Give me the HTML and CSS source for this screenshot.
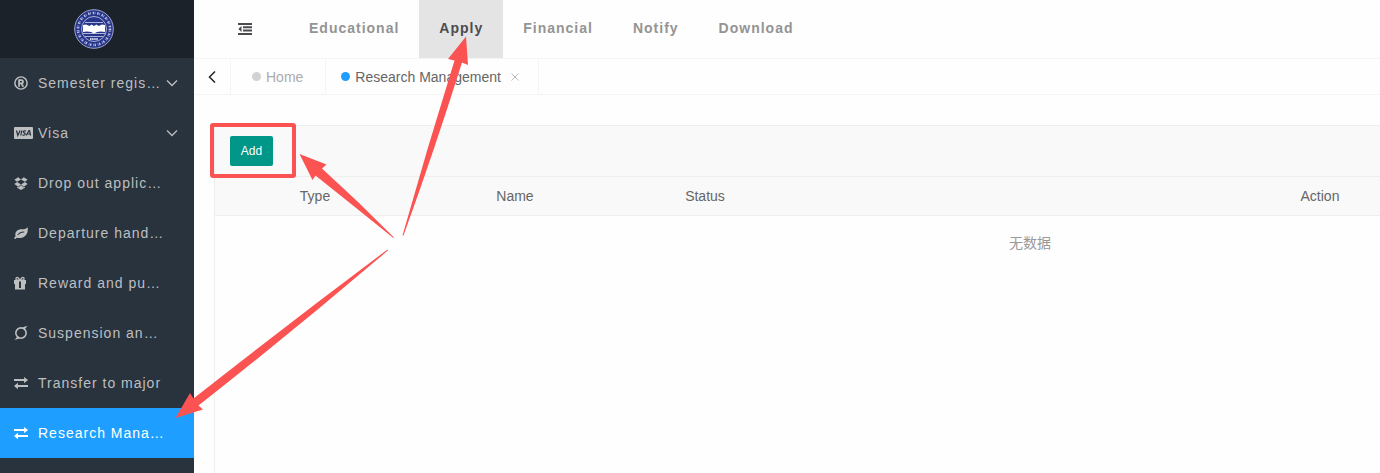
FILE: index.html
```html
<!DOCTYPE html>
<html lang="en">
<head>
    <meta charset="UTF-8">
    <meta name="viewport" content="width=device-width, initial-scale=1.0">
    <title>Research Management</title>
    <link rel="stylesheet" href="styles.css">
</head>
<body>
    <div class="layout">
        <aside class="side">
            <div class="logo">
                <svg width="40" height="40" viewBox="0 0 40 40" aria-hidden="true">
                    <circle cx="20" cy="20" r="19.300" fill="#26358a" stroke="#9fa7cf"/>
                    <circle cx="20" cy="20" r="16" fill="none" stroke="#b9bfe0" stroke-width="2.600" stroke-dasharray="1.400 .7 .6 1.900"/>
                    <circle cx="20" cy="20" r="12.500" fill="#26358a" stroke="#a9b0d6"/>
                    <path d="M11 13.500h18M8.500 24.500h23M11 27.500h18" stroke="#aeb5da"/>
                    <path d="M9 16l3-.5 3.500 1.500 2-1.500L20 17l2.500-1.500 2 1.500 3.500-1.500 3 .5v7l-4-.5-4 .5-3 1.500-3-1.500-4-.5-4 .5z" fill="#fff"/>
                    <path d="M16 30h8" stroke="#d5d8ec" stroke-width="2" stroke-dasharray="1.500 .6"/>
                </svg>
            </div>
            <ul class="menu">
                <li><a href="#">
                    <svg class="icon" viewBox="0 0 16 16"><circle cx="8" cy="8" r="7" fill="none" stroke="currentColor" stroke-width="1.700"/><path d="M5.800 12.300V4.600h2.600a1.900 1.900 0 0 1 0 3.800H5.800M8.300 8.400l2.400 3.900" fill="none" stroke="currentColor" stroke-width="2"/></svg>
                    <span>Semester registration</span>
                    <svg class="arrow" viewBox="0 0 12 8"><path d="M1 1.500l5 5 5-5" fill="none" stroke="currentColor" stroke-width="1.300"/></svg>
                </a></li>
                <li><a href="#">
                    <svg class="icon wide" viewBox="0 0 19 14"><rect x="0" y="1" width="19" height="12" rx="1" fill="currentColor"/><path d="M2.500 4.500l1.300 5 2.300-5M7.800 4.500l-1 5M12 5c-3-.8-3.300 1.200-1.600 1.900 1.800.8.600 2.800-1.900 2.100M12.300 9.500l2.600-5h.6l1.100 5M13.700 8h2.500" fill="none" stroke="#28333e" stroke-width="1.200"/></svg>
                    <span>Visa</span>
                    <svg class="arrow" viewBox="0 0 12 8"><path d="M1 1.500l5 5 5-5" fill="none" stroke="currentColor" stroke-width="1.300"/></svg>
                </a></li>
                <li><a href="#">
                    <svg class="icon" viewBox="0 0 16 16"><path d="M4.800 1.300L.4 4.200l3.100 2.500L8 3.900zM11.200 1.300l4.400 2.900-3.100 2.500L8 3.900zM.4 9.200l3.100-2.400L8 9.600l-3.200 2.700zM15.600 9.200l-3.100-2.400L8 9.600l3.200 2.700zM3.500 12.300v1L8 16l4.500-2.700v-1l-1.300.8L8 10.500l-3.200 2.600z" fill="currentColor"/></svg>
                    <span>Drop out application</span>
                </a></li>
                <li><a href="#">
                    <svg class="icon" viewBox="0 0 16 16"><path d="M15.500 1.500c1 5-.9 10.300-6.500 12-2.500.7-4.500-.2-5.600-.2-.9 0-1.200 1.500-2.200 1.500-.7 0-1.200-.8-1-1.300.3-.7 1.600-1.300 1.500-2C.8 6.500 4 3.900 8.500 3.800c3.300 0 5.300-.2 7-2.300zM4.800 10.300C6.300 8.900 8 7.500 11.300 7.400c.7 0 .7-1 0-1-3.500 0-5.500 1.400-7.200 3.200-.5.700.2 1.200.7.700z" fill="currentColor" fill-rule="evenodd"/></svg>
                    <span>Departure handling</span>
                </a></li>
                <li><a href="#">
                    <svg class="icon gift" viewBox="0 0 12 14"><path d="M0 4h12v4h-1v5.500H1V8H0zM5 5.500V12h2V5.500z" fill="currentColor" fill-rule="evenodd"/><path d="M5.800 4.300C4.800 2 4.100 1.400 3.200 1.400c-1.700 0-1.700 2.800 0 2.800h5.600c1.700 0 1.700-2.800 0-2.800-.9 0-1.600.6-2.600 2.900" fill="none" stroke="currentColor" stroke-width="1.300"/></svg>
                    <span>Reward and punishment</span>
                </a></li>
                <li><a href="#">
                    <svg class="icon" viewBox="0 0 16 16"><path d="M.2 15.700c2.500 0 4.300-.6 6-1.600L3.800 11.500C3.400 13 2.200 14.700.2 15.700zM15.800.3c-2.500 0-4.300.6-6 1.600l2.400 2.600C12.600 3 13.800 1.300 15.800.3z" fill="currentColor"/><circle cx="8" cy="8" r="5.900" fill="none" stroke="currentColor" stroke-width="1.800"/></svg>
                    <span>Suspension and resumption</span>
                </a></li>
                <li><a href="#">
                    <svg class="icon" viewBox="0 0 16 16"><path d="M0 3.500h11.500V1L16 4.600l-4.500 3.600V5.700H0zM16 10.300H4.500V7.800L0 11.400 4.500 15v-2.500H16z" fill="currentColor"/></svg>
                    <span>Transfer to major</span>
                </a></li>
                <li><a href="#" class="on">
                    <svg class="icon" viewBox="0 0 16 16"><path d="M0 3.500h11.500V1L16 4.600l-4.500 3.600V5.700H0zM16 10.300H4.500V7.800L0 11.400 4.500 15v-2.500H16z" fill="currentColor"/></svg>
                    <span>Research Management</span>
                </a></li>
            </ul>
        </aside>

        <main class="main">
            <header class="header">
                <button class="fold" aria-label="Toggle menu">
                    <svg width="14" height="12" viewBox="0 0 14 12"><path d="M0 1h14M5 4.300h9M5 7.600h9M0 11h14" stroke="currentColor" stroke-width="2"/><path d="M3.500 3v6L.3 6z" fill="currentColor"/></svg>
                </button>
                <nav class="nav">
                    <a href="#">Educational</a>
                    <a href="#" class="on">Apply</a>
                    <a href="#">Financial</a>
                    <a href="#">Notify</a>
                    <a href="#">Download</a>
                </nav>
            </header>

            <div class="tabs">
                <button class="prev" aria-label="Previous tab">
                    <svg width="8" height="12" viewBox="0 0 8 12"><path d="M7 .5L1.500 6 7 11.500" fill="none" stroke="currentColor" stroke-width="1.500"/></svg>
                </button>
                <a href="#" class="tab"><i class="dot"></i>Home</a>
                <div class="tab on">
                    <i class="dot"></i>Research Management
                    <button class="close" aria-label="Close tab">
                        <svg width="8" height="8" viewBox="0 0 8 8"><path d="M.5.5l7 7M7.500.5l-7 7" stroke="currentColor"/></svg>
                    </button>
                </div>
            </div>

            <section class="grid">
                <div class="toolbar">
                    <button class="add">Add</button>
                </div>
                <table class="table">
                    <colgroup>
                        <col class="c-type">
                        <col class="c-name">
                        <col class="c-status">
                        <col>
                    </colgroup>
                    <thead>
                        <tr><th>Type</th><th>Name</th><th>Status</th><th>Action</th></tr>
                    </thead>
                    <tbody>
                        <tr><td colspan="4" lang="zh">无数据</td></tr>
                    </tbody>
                </table>
            </section>
        </main>
    </div>

    <!-- guide marks over the page -->
    <svg class="marks" width="480" height="430" viewBox="0 0 480 430" aria-hidden="true">
        <rect x="212" y="125" width="82" height="51" rx="1" fill="none" stroke="#fb5252" stroke-width="4"/>
        <g fill="#fb5252">
            <path d="M299.500 154l27 10.500-4.500 4Q359 202 394 237.500l-.6.600Q355 207 315.500 175.500l-3 4.500z"/>
            <path d="M466 36.500l2 28.500-6-2.500Q434.500 150 403.500 235.500h-1Q427.500 147 454.500 60.500l-6.500-1.500z"/>
            <path d="M175.500 418L190 393l3.500 5.500Q290 322.500 387.500 249.500l.6.800Q296 329 198.500 405.500l4.500 4z"/>
        </g>
    </svg>
</body>
</html>
```

FILE: styles.css
```css
* {
    box-sizing: border-box;
}
body {
    margin: 0;
    font-family: "Liberation Sans", Arial, "Noto Sans CJK SC", sans-serif;
    font-size: 14px;
    line-height: 24px;
    color: #666;
    background: #fefefe;
}
a {
    color: inherit;
    text-decoration: none;
}
button {
    padding: 0;
    border: none;
    background: none;
    font: inherit;
    color: inherit;
    cursor: pointer;
}
svg {
    display: block;
}
.layout {
    display: flex;
    min-height: 100vh;
}

/* sidebar */
.side {
    flex: 0 0 194px;
    background: #28333e;
}
.logo {
    display: flex;
    align-items: center;
    justify-content: center;
    height: 58px;
    padding-right: 6px;
    background: #1b2229;
}
.menu {
    margin: 0;
    padding: 0;
    list-style: none;
}
.menu a {
    display: flex;
    align-items: center;
    height: 50px;
    padding: 0 16px 0 14px;
    color: #bebfc1;
    letter-spacing: 1px;
}
.menu a.on {
    background: #1e9fff;
    color: #fff;
}
.menu span {
    width: 126px;
    overflow: hidden;
    text-overflow: ellipsis;
    white-space: nowrap;
}
.icon {
    flex: none;
    width: 14px;
    height: 14px;
    margin-right: 10px;
}
.icon.wide {
    width: 19px;
    margin-right: 5px;
}
.icon.gift {
    width: 12px;
    margin-right: 12px;
}
.arrow {
    flex: none;
    width: 12px;
    height: 8px;
    margin-left: auto;
}

/* header */
.main {
    display: flex;
    flex-direction: column;
    flex: 1;
    min-width: 0;
    overflow: hidden;
}
.header {
    display: flex;
    height: 58px;
}
.fold {
    display: flex;
    align-items: center;
    justify-content: center;
    width: 102px;
    color: #4c4c50;
}
.nav {
    display: flex;
    margin-left: -7px;
}
.nav a {
    padding: 0 20px;
    line-height: 56px;
    font-weight: bold;
    letter-spacing: 1px;
    color: #949494;
}
.nav a.on {
    background: #e4e4e4;
    color: #4c4c50;
}

/* tabs */
.tabs {
    display: flex;
    height: 37px;
    border-top: 1px solid #f4f4f4;
    border-bottom: 1px solid #f4f4f4;
}
.prev {
    display: flex;
    align-items: center;
    justify-content: center;
    width: 37px;
    border-right: 1px solid #f4f4f4;
    color: #222;
}
.tab {
    display: flex;
    align-items: center;
    padding: 0 22px 0 21px;
    border-right: 1px solid #f4f4f4;
    color: #acacac;
}
.tab.on {
    padding: 0 19px 0 15px;
    color: #666;
}
.dot {
    width: 9px;
    height: 9px;
    margin-right: 5px;
    border-radius: 50%;
    background: #d2d2d2;
}
.tab.on .dot {
    background: #1e9fff;
}
.close {
    margin-left: 10px;
    color: #bbb;
}

/* grid, runs on past the right edge */
.grid {
    flex: 1;
    width: 1632px;
    margin: 30px 0 0 20px;
    border: 1px solid #eee;
    border-bottom: none;
}
.toolbar {
    display: flex;
    align-items: center;
    height: 50px;
    padding-left: 15px;
    background: #f9f9f9;
}
.add {
    width: 43px;
    height: 30px;
    border-radius: 2px;
    background: #009688;
    color: #fff;
    font-size: 12px;
}
.table {
    width: 100%;
    table-layout: fixed;
    border-collapse: collapse;
    text-align: center;
}
.c-type,
.c-name {
    width: 200px;
}
.c-status {
    width: 180px;
}
.table th {
    height: 39px;
    padding: 0;
    border-top: 1px solid #eee;
    border-bottom: 1px solid #eee;
    background: #f9f9f9;
    font-weight: normal;
}
.table td {
    padding: 15px 0;
    color: #999;
}

.marks {
    position: absolute;
    top: 0;
    left: 0;
    pointer-events: none;
}
```
